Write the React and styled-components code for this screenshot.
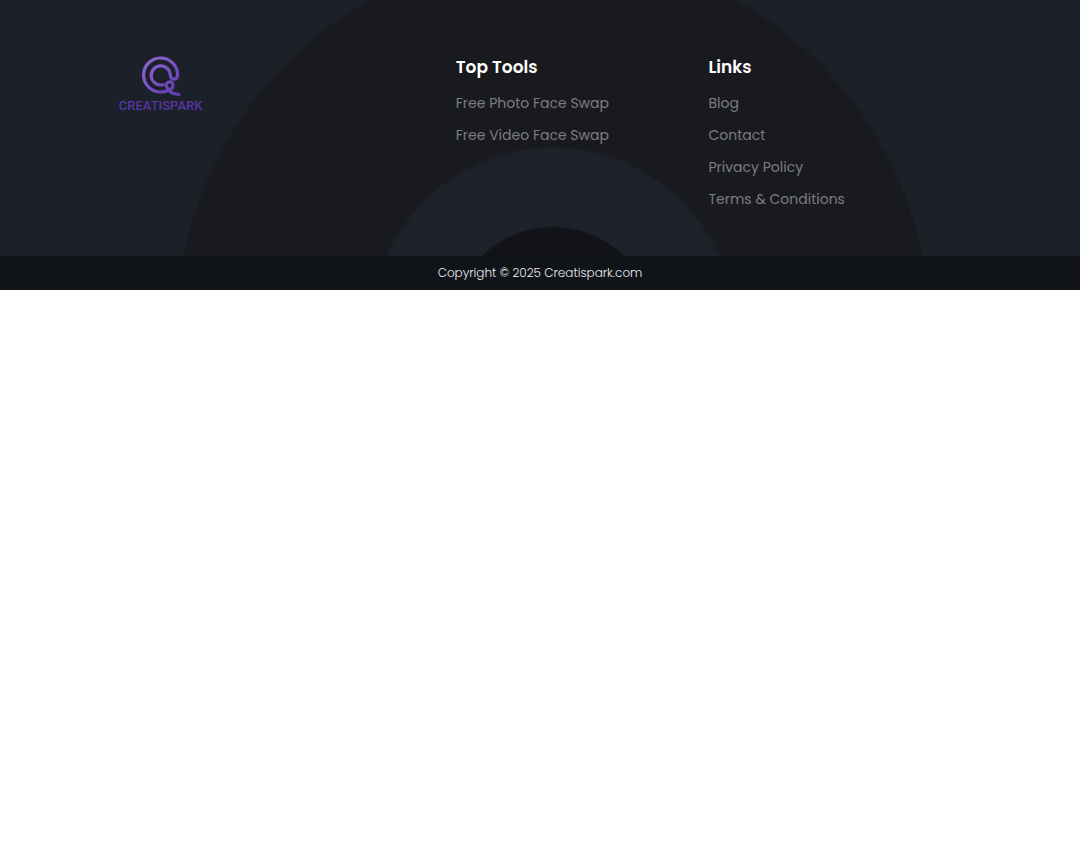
import React from 'react';
import styled, { createGlobalStyle } from 'styled-components';

const GlobalStyle = createGlobalStyle`
  *, *::before, *::after { box-sizing: border-box; }
  body {
    margin: 0;
    background: #fff;
    font-family: Poppins, Inter, 'Liberation Sans', sans-serif;
  }
`;

const Footer = styled.footer`
  background: #101317;
`;

const FooterMain = styled.div`
  display: grid;
  grid-template-columns: 4fr 3fr 3fr;
  padding: 56px 11% 41px;
  background: radial-gradient(
    circle at 51.2% 329px,
    #111318 101px,
    #1e222b 103px,
    #1d2129 180px,
    #191a1e 183px,
    #191a1e 375px,
    #1c2028 378px
  );
`;

const LogoLink = styled.a`
  display: inline-flex;
  flex-direction: column;
  align-items: center;
  color: #5535a6;
  text-decoration: none;
`;

const LogoMark = styled.svg`
  display: block;
  width: 40px;
  height: 42px;
`;

const LogoName = styled.span`
  font: 500 13px/16px Roboto, sans-serif;
`;

const Heading = styled.h2`
  margin: 0 0 9px;
  color: #fff;
  font-size: 17px;
  font-weight: 600;
  line-height: 22px;
`;

const LinkList = styled.ul`
  margin: 0;
  padding: 0;
  list-style: none;
`;

const LinkItem = styled.li`
  font-size: 14px;
  line-height: 32px;
`;

const FooterLink = styled.a`
  color: #7b7c86;
  font-weight: 400;
  text-decoration: none;
  white-space: nowrap;
`;

const Copyright = styled.p`
  margin: 0;
  padding: 8px 16px;
  color: #ececee;
  font-size: 12px;
  font-weight: 300;
  line-height: 18px;
  text-align: center;
`;

const columns = [
  { title: 'Top Tools', links: ['Free Photo Face Swap', 'Free Video Face Swap'] },
  { title: 'Links', links: ['Blog', 'Contact', 'Privacy Policy', 'Terms & Conditions'] },
];

function Logo() {
  return (
    <LogoLink href="#home">
      <LogoMark viewBox="0 0 40 42" fill="none" aria-hidden="true">
        <defs>
          <linearGradient id="mark" x1="4" y1="4" x2="34" y2="40" gradientUnits="userSpaceOnUse">
            <stop stopColor="#9166d6" />
            <stop offset="0.5" stopColor="#7950c4" />
            <stop offset="1" stopColor="#5f3aae" />
          </linearGradient>
        </defs>
        <path
          d="M22 28.8A9.6 9.6 0 1 1 29.4 19.6C29.4 24.4 36.6 24.6 36.6 18.5A17 17 0 1 0 19.6 36C26 36 32 33.4 32 29.4A3.4 3.4 0 1 0 25.8 31.2C28 34.4 29.6 38.4 38 38.4"
          stroke="url(#mark)"
          strokeWidth="3.2"
          strokeLinecap="round"
          strokeLinejoin="round"
        />
      </LogoMark>
      <LogoName>CREATISPARK</LogoName>
    </LogoLink>
  );
}

export default function App() {
  return (
    <>
      <GlobalStyle />
      <Footer>
        <FooterMain>
          <div>
            <Logo />
          </div>
          {columns.map(({ title, links }) => (
            <nav key={title} aria-label={title}>
              <Heading>{title}</Heading>
              <LinkList>
                {links.map((label) => (
                  <LinkItem key={label}>
                    <FooterLink href="#">{label}</FooterLink>
                  </LinkItem>
                ))}
              </LinkList>
            </nav>
          ))}
        </FooterMain>
        <Copyright>Copyright © 2025 Creatispark.com</Copyright>
      </Footer>
    </>
  );
}
